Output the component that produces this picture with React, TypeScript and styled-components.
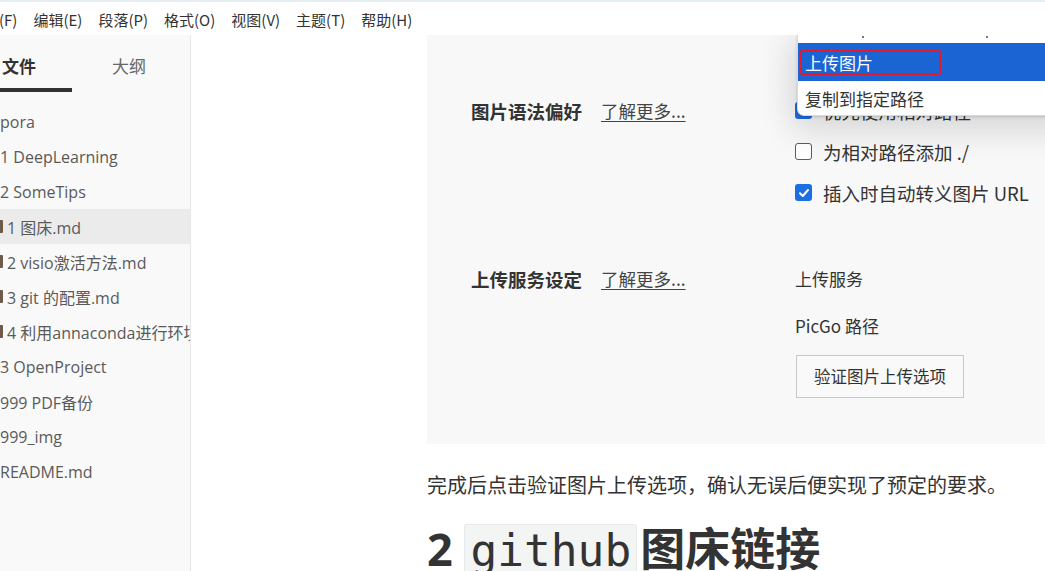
import React from "react";
import styled, { createGlobalStyle } from "styled-components";

const Global = createGlobalStyle`
  html, body { margin: 0; padding: 0; background: #fff; }
  body { width: 1045px; height: 571px; overflow: hidden; }
  * { box-sizing: border-box; }
`;

const Shell = styled.div`
  display: flex;
  flex-direction: column;
  width: 1045px;
  height: 571px;
  overflow: hidden;
  font-family: "Open Sans", "Noto Sans CJK SC", sans-serif;
`;

const TopStrip = styled.div`
  height: 2px;
  background: #e6f0f4;
  flex: none;
`;

const MenuBar = styled.div`
  height: 33px;
  flex: none;
  display: flex;
  align-items: center;
  gap: 16px;
  padding-top: 2px;
  background: #fff;
  font-family: "Noto Sans CJK SC", sans-serif;
  font-size: 15px;
  color: #333;
  white-space: nowrap;
`;

const MenuItem = styled.span<{ $clip?: boolean }>`
  margin-left: ${(p) => (p.$clip ? "-1px" : "0")};
`;

const Body = styled.div`
  flex: 1;
  display: flex;
  min-height: 0;
`;

const Sidebar = styled.aside`
  width: 191px;
  flex: none;
  background: #f9f9f9;
  border-right: 1px solid #e6e6e6;
  overflow: hidden;
`;

const TabBar = styled.div`
  display: flex;
  margin-left: -36px;
  height: 57px;
`;

const Tab = styled.div<{ $active?: boolean }>`
  position: relative;
  width: 110px;
  flex: none;
  text-align: center;
  padding-top: 19px;
  font-size: 17px;
  line-height: 26px;
  font-weight: ${(p) => (p.$active ? 700 : 400)};
  color: ${(p) => (p.$active ? "#333" : "#666")};
  &::after {
    content: "";
    display: ${(p) => (p.$active ? "block" : "none")};
    position: absolute;
    left: 3px;
    right: 2px;
    bottom: 0;
    height: 4px;
    background: #333;
  }
`;

const FileList = styled.ul`
  list-style: none;
  margin: 12px 0 0;
  padding: 0;
`;

const FileRow = styled.li<{ $active?: boolean }>`
  display: flex;
  align-items: center;
  gap: 4px;
  height: 35px;
  background: ${(p) => (p.$active ? "#ebebeb" : "transparent")};
  font-size: 16px;
  color: #5a5a5a;
  white-space: nowrap;
`;

const FileIcon = styled.span`
  width: 3px;
  height: 13px;
  flex: none;
  background: #6e5b4c;
  border-radius: 0 1px 1px 0;
`;

const Main = styled.main`
  flex: 1;
  overflow: hidden;
  padding-left: 236px;
  background: #fff;
`;

const Panel = styled.div`
  position: relative;
  width: 720px;
  height: 409px;
  background: #f8f8f8;
  padding: 55px 0 0 44px;
  font-family: "Noto Sans CJK SC", sans-serif;
  color: #333;
`;

const Section = styled.div<{ $gap?: number }>`
  display: grid;
  grid-template-columns: 324px 1fr;
  margin-top: ${(p) => p.$gap ?? 0}px;
`;

const Label = styled.div`
  display: flex;
  align-items: center;
  height: 41px;
  white-space: nowrap;
`;

const LabelTitle = styled.span`
  font-size: 18.5px;
  font-weight: 700;
  color: #333;
`;

const LearnMore = styled.span`
  margin-left: 19px;
  font-size: 17.5px;
  color: #444;
  text-decoration: underline;
  text-underline-offset: 3px;
`;

const Controls = styled.div`
  display: flex;
  flex-direction: column;
`;

const CheckRow = styled.div`
  display: flex;
  align-items: center;
  gap: 11px;
  height: 41px;
  font-size: 18.5px;
  color: #333;
  white-space: nowrap;
`;

const Box = styled.span<{ $checked?: boolean }>`
  width: 17px;
  height: 17px;
  flex: none;
  border-radius: 3px;
  display: flex;
  align-items: center;
  justify-content: center;
  background: ${(p) => (p.$checked ? "#1b6fe3" : "#fff")};
  border: ${(p) => (p.$checked ? "none" : "1.5px solid #5c5c5c")};
`;

const TextRow = styled.div<{ $mt?: number }>`
  display: flex;
  align-items: center;
  height: 41px;
  margin-top: ${(p) => p.$mt ?? 0}px;
  font-size: 17px;
  color: #333;
  white-space: nowrap;
`;

const Button = styled.div`
  margin-top: 8.5px;
  margin-left: 1px;
  width: 168px;
  height: 43px;
  display: flex;
  align-items: center;
  justify-content: center;
  border: 1px solid #c8c8c8;
  background: #f9f9f9;
  font-size: 16.5px;
  color: #333;
`;

const Dropdown = styled.div`
  position: absolute;
  left: 370px;
  top: 0;
  width: 330px;
  background: #fff;
  border-left: 1px solid #d8d8d8;
  border-bottom: 1px solid #d8d8d8;
  border-radius: 0 0 0 7px;
  box-shadow: 0 8px 34px 6px rgba(0, 0, 0, 0.14), 0 1px 3px rgba(0, 0, 0, 0.15);
  z-index: 2;
  font-family: "Noto Sans CJK SC", sans-serif;
`;

const StubRow = styled.div`
  position: relative;
  height: 8px;
`;

const Dot = styled.span<{ $x: number }>`
  position: absolute;
  left: ${(p) => p.$x}px;
  top: 1px;
  width: 2px;
  height: 2px;
  background: #777;
`;

const SelectedRow = styled.div`
  height: 38px;
  background: #1b64d3;
  display: flex;
  align-items: center;
  padding-left: 2px;
`;

const RedBox = styled.span`
  width: 141px;
  height: 25px;
  border: 2.5px solid #e5192b;
  border-radius: 2px;
  display: flex;
  align-items: center;
  padding-left: 3px;
  font-size: 17px;
  color: #fff;
`;

const PlainRow = styled.div`
  height: 34px;
  display: flex;
  align-items: center;
  padding-left: 7px;
  font-size: 17px;
  color: #333;
`;

const Paragraph = styled.p`
  margin: 26px 0 0;
  font-size: 20px;
  line-height: 32px;
  color: #333;
  white-space: nowrap;
`;

const Heading = styled.h2`
  margin: 20px 0 0;
  font-size: 45px;
  line-height: 54px;
  font-weight: 700;
  color: #333;
  white-space: nowrap;
`;

const Code = styled.code`
  font-family: "DejaVu Sans Mono", monospace;
  font-weight: 400;
  font-size: 44.5px;
  background: #f3f4f4;
  border: 1px solid #e7eaed;
  border-radius: 3px;
  padding: 0 5px;
  margin: 0 3px 0 0;
`;

const Check = () => (
  <svg width="12" height="12" viewBox="0 0 12 12" fill="none">
    <path d="M2 6.3 L4.8 9 L10 3" stroke="#fff" strokeWidth="2" strokeLinecap="round" strokeLinejoin="round" />
  </svg>
);

const files: { name: string; icon?: boolean; active?: boolean }[] = [
  { name: "pora" },
  { name: "1 DeepLearning" },
  { name: "2 SomeTips" },
  { name: "1 图床.md", icon: true, active: true },
  { name: "2 visio激活方法.md", icon: true },
  { name: "3 git 的配置.md", icon: true },
  { name: "4 利用annaconda进行环境配置.md", icon: true },
  { name: "3 OpenProject" },
  { name: "999 PDF备份" },
  { name: "999_img" },
  { name: "README.md" },
];

export default function App() {
  return (
    <Shell>
      <Global />
      <TopStrip />
      <MenuBar>
        <MenuItem $clip>(F)</MenuItem>
        <MenuItem>编辑(E)</MenuItem>
        <MenuItem>段落(P)</MenuItem>
        <MenuItem>格式(O)</MenuItem>
        <MenuItem>视图(V)</MenuItem>
        <MenuItem>主题(T)</MenuItem>
        <MenuItem>帮助(H)</MenuItem>
      </MenuBar>
      <Body>
        <Sidebar>
          <TabBar>
            <Tab $active>文件</Tab>
            <Tab>大纲</Tab>
          </TabBar>
          <FileList>
            {files.map((f) => (
              <FileRow key={f.name} $active={f.active}>
                {f.icon && <FileIcon />}
                <span>{f.name}</span>
              </FileRow>
            ))}
          </FileList>
        </Sidebar>
        <Main>
          <Panel>
            <Section>
              <Label>
                <LabelTitle>图片语法偏好</LabelTitle>
                <LearnMore>了解更多...</LearnMore>
              </Label>
              <Controls>
                <CheckRow>
                  <Box $checked>
                    <Check />
                  </Box>
                  优先使用相对路径
                </CheckRow>
                <CheckRow>
                  <Box />
                  为相对路径添加 ./
                </CheckRow>
                <CheckRow>
                  <Box $checked>
                    <Check />
                  </Box>
                  插入时自动转义图片 URL
                </CheckRow>
              </Controls>
            </Section>
            <Section $gap={45}>
              <Label>
                <LabelTitle>上传服务设定</LabelTitle>
                <LearnMore>了解更多...</LearnMore>
              </Label>
              <Controls>
                <TextRow>上传服务</TextRow>
                <TextRow $mt={6}>PicGo 路径</TextRow>
                <Button>验证图片上传选项</Button>
              </Controls>
            </Section>
            <Dropdown>
              <StubRow>
                <Dot $x={64} />
                <Dot $x={188} />
              </StubRow>
              <SelectedRow>
                <RedBox>上传图片</RedBox>
              </SelectedRow>
              <PlainRow>复制到指定路径</PlainRow>
            </Dropdown>
          </Panel>
          <Paragraph>完成后点击验证图片上传选项，确认无误后便实现了预定的要求。</Paragraph>
          <Heading>
            2 <Code>github</Code>图床链接
          </Heading>
        </Main>
      </Body>
    </Shell>
  );
}
